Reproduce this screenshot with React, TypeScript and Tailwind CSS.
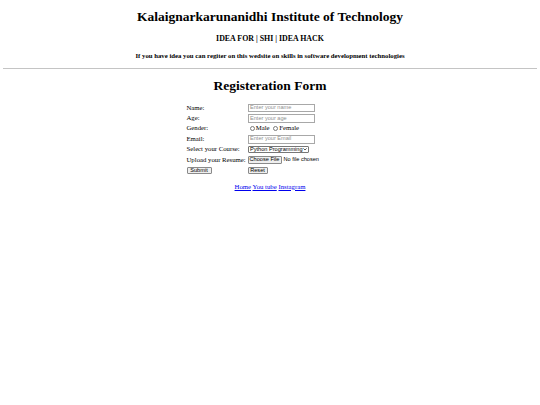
import React from 'react';

const serif = "font-['Liberation_Serif','Times_New_Roman',serif]";
const sans = "font-['Liberation_Sans',Arial,sans-serif]";

function TextInput({ placeholder }: { placeholder: string }) {
  return (
    <div
      className={`flex h-[8.6px] w-[67px] items-center border border-[#a8a8a8] bg-white pl-[1.5px] text-[5.6px] leading-none text-[#8f8f8f] ${sans}`}
    >
      {placeholder}
    </div>
  );
}

function Radio({ label }: { label: string }) {
  return (
    <span className="inline-flex items-center gap-[1px]">
      <span className="ml-[2px] inline-block h-[5.2px] w-[5.2px] rounded-full border border-[#7a7a7a] bg-white" />
      <span>{label}</span>
    </span>
  );
}

function Button({ children, w }: { children: React.ReactNode; w: string }) {
  return (
    <div
      className={`flex h-[7.2px] items-center justify-center rounded-[1px] border border-[#8a8a8a] bg-[#efefef] text-[5.6px] leading-none text-black ${sans} ${w}`}
    >
      {children}
    </div>
  );
}

const rows: { label: string; field: React.ReactNode }[] = [
  { label: 'Name:', field: <TextInput placeholder="Enter your name" /> },
  { label: 'Age:', field: <TextInput placeholder="Enter your age" /> },
  {
    label: 'Gender:',
    field: (
      <span className="flex items-center gap-[1.5px]">
        <Radio label="Male" />
        <Radio label="Female" />
      </span>
    ),
  },
  { label: 'Email:', field: <TextInput placeholder="Enter your Email" /> },
  {
    label: 'Select your Course:',
    field: (
      <div
        className={`flex h-[6.6px] w-[61.5px] items-center justify-between rounded-[1px] border border-[#777] bg-white pl-[1.5px] pr-[1px] text-[5.6px] leading-none ${sans}`}
      >
        <span>Python Programming</span>
        <svg viewBox="0 0 10 6" className="h-[2.4px] w-[4px]">
          <path d="M1 1l4 4 4-4" fill="none" stroke="#111" strokeWidth="1.8" />
        </svg>
      </div>
    ),
  },
  {
    label: 'Upload your Resume:',
    field: (
      <div className={`flex items-center gap-[2px] text-[5.6px] leading-none ${sans}`}>
        <Button w="w-[34px]">Choose File</Button>
        <span>No file chosen</span>
      </div>
    ),
  },
];

export default function App() {
  return (
    <div className={`min-h-[405px] bg-white pt-[9px] text-black ${serif}`}>
      <h1 className="text-center text-[13.5px] font-bold leading-[15.6px]">
        Kalaignarkarunanidhi Institute of Technology
      </h1>
      <h3 className="mt-[9px] text-center text-[7.9px] font-bold leading-[9.1px]">
        IDEA FOR | SHI | IDEA HACK
      </h3>
      <h4 className="mt-[9px] text-center text-[6.75px] font-bold leading-[7.8px]">
        If you have idea you can regiter on this wedsite on skills in software development technologies
      </h4>
      <hr className="mx-[3.4px] mt-[9px] border-t border-[#c4c4c4]" />

      <h1 className="mt-[9px] text-center text-[13.5px] font-bold leading-[15.6px]">
        Registeration Form
      </h1>

      <div className="mt-[8.8px] flex justify-center">
        <div className="grid grid-cols-[61px_106px] text-[6.75px] leading-none">
          {rows.map((r) => (
            <React.Fragment key={r.label}>
              <div className="flex h-[10.4px] items-center">{r.label}</div>
              <div className="flex h-[10.4px] items-center">{r.field}</div>
            </React.Fragment>
          ))}
          <div className="flex h-[10.4px] items-center">
            <Button w="w-[25px]">Submit</Button>
          </div>
          <div className="flex h-[10.4px] items-center">
            <Button w="w-[20px]">Reset</Button>
          </div>
        </div>
      </div>

      <p className="mt-[7.2px] text-center text-[6.75px] leading-[7.8px]">
        <a href="#" className="text-[#0000ee] underline">Home</a>{' '}
        <a href="#" className="text-[#0000ee] underline">You tube</a>{' '}
        <a href="#" className="text-[#0000ee] underline">Instagram</a>
      </p>
    </div>
  );
}
